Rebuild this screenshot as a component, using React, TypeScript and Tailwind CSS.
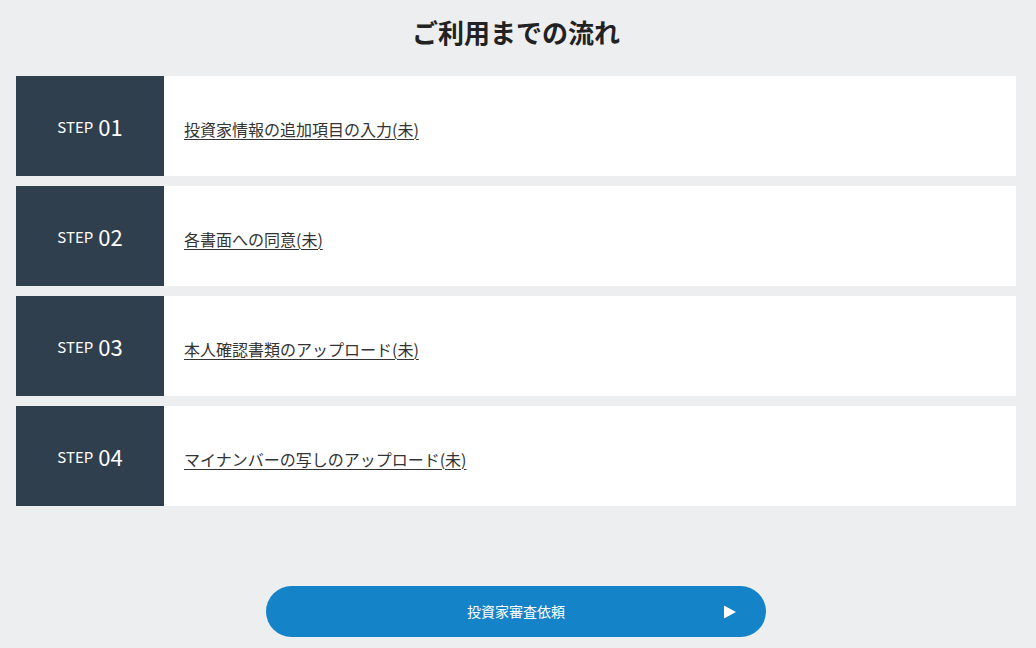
import React from 'react';

const steps = [
  { no: '01', label: '投資家情報の追加項目の入力(未)' },
  { no: '02', label: '各書面への同意(未)' },
  { no: '03', label: '本人確認書類のアップロード(未)' },
  { no: '04', label: 'マイナンバーの写しのアップロード(未)' },
];

const font = { fontFamily: '"Noto Sans CJK JP", "Noto Sans", sans-serif' };

export default function App() {
  return (
    <div className="min-h-[648px] w-full bg-[#edeef0] px-4 text-[#333]" style={font}>
      <div className="w-[1000px]">
        <h1 className="pt-[13px] pb-[26px] text-center text-[26px] leading-[37px] font-bold text-[#222]">
          ご利用までの流れ
        </h1>

        <div className="flex flex-col gap-[10px]">
          {steps.map(step => (
            <div key={step.no} className="flex h-[100px] bg-white">
              <div className="flex w-[148px] shrink-0 items-center justify-center gap-[5px] bg-[#2f3f4d] text-white">
                <span className="text-[15px] leading-none">STEP</span>
                <span className="text-[22px] leading-none">{step.no}</span>
              </div>
              <div className="flex items-center pl-5 pt-[5px]">
                <a
                  href="#"
                  className="text-[16px] text-[#333] underline decoration-1 underline-offset-[3px]"
                >
                  {step.label}
                </a>
              </div>
            </div>
          ))}
        </div>

        <div className="flex justify-center pt-[80px]">
          <button className="relative flex h-[51px] w-[500px] items-center justify-center rounded-full bg-[#1583c8] text-[14px] text-white">
            投資家審査依頼
            <span className="absolute right-[30px] top-1/2 -translate-y-1/2">
              <svg width="12" height="13" viewBox="0 0 12 13">
                <path d="M0 0 L12 6.5 L0 13 Z" fill="white" />
              </svg>
            </span>
          </button>
        </div>
      </div>
    </div>
  );
}
